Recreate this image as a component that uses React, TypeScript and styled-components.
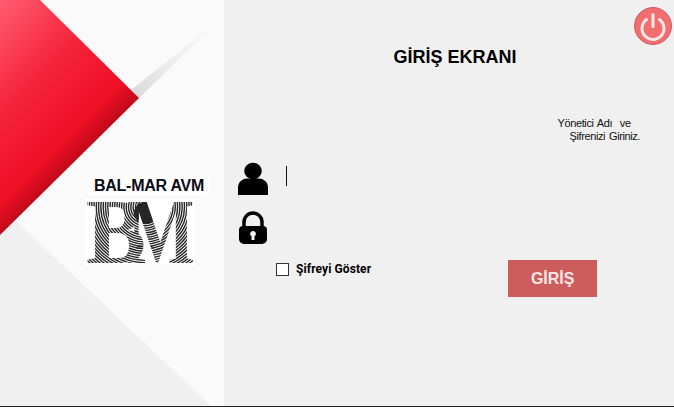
import React from "react";
import styled, { createGlobalStyle } from "styled-components";

const GlobalStyle = createGlobalStyle`
  html, body { margin: 0; padding: 0; background: #f0f0f0; }
  body { font-family: "Liberation Sans", Arial, sans-serif; overflow: hidden; }
`;

const Page = styled.div`
  width: 674px;
  height: 407px;
  box-sizing: border-box;
  display: flex;
  border-bottom: 1px solid #222;
  background: #f0f0f0;
`;

const SidePanel = styled.aside`
  position: relative;
  width: 224px;
  flex: none;
  background: #fafafa;
  overflow: hidden;
  display: flex;
  flex-direction: column;
  align-items: flex-start;
  padding: 176px 0 0 85px;
  box-sizing: border-box;
`;

const Backdrop = styled.svg`
  position: absolute;
  left: 0;
  top: 0;
`;

const BrandName = styled.div`
  position: relative;
  margin-left: 4px;
  width: 120px;
  height: 19px;
  background: #fff;
  color: #0a0a14;
  font-size: 16px;
  font-weight: 700;
  line-height: 19px;
  letter-spacing: -0.25px;
  text-align: center;
  white-space: nowrap;
`;

const LogoMark = styled.svg`
  position: relative;
  margin-top: 4px;
  display: block;
`;

const Main = styled.main`
  flex: 1;
  display: flex;
  flex-direction: column;
  padding: 7px 2px 0 14px;
  box-sizing: border-box;
`;

const PowerButton = styled.button`
  align-self: flex-end;
  width: 38px;
  height: 38px;
  padding: 0;
  border: 0;
  background: none;
  display: block;
`;

const Title = styled.h1`
  margin: 2px 0 0;
  height: 20px;
  color: #000;
  font-size: 18px;
  font-weight: 700;
  line-height: 20px;
  text-align: center;
`;

const Hint = styled.p`
  align-self: flex-end;
  margin: 50px 32px 0 0;
  color: #111;
  font-size: 11px;
  line-height: 13px;
  letter-spacing: -0.4px;
  word-spacing: 1.2px;
  white-space: pre;
`;

const HintLine = styled.span<{ $indent: number }>`
  display: block;
  padding-left: ${(p) => p.$indent}px;
`;

const FieldRow = styled.div<{ $top: number }>`
  display: flex;
  align-items: center;
  margin-top: ${(p) => p.$top}px;
  height: 34px;
`;

const FieldIcon = styled.svg`
  width: 30px;
  height: 34px;
  flex: none;
`;

const Caret = styled.span`
  width: 1px;
  height: 20px;
  margin: -6px 0 0 18px;
  background: #111;
`;

const OptionsRow = styled.div`
  display: flex;
  align-items: flex-start;
  margin-top: 15px;
  padding-left: 38px;
`;

const ShowPassword = styled.label`
  display: flex;
  align-items: center;
  gap: 7px;
  margin-top: 2px;
  color: #000;
  font-family: Roboto, "Liberation Sans", sans-serif;
  font-size: 12px;
  font-weight: 700;
  letter-spacing: 0.1px;
`;

const CheckBox = styled.span`
  width: 11px;
  height: 11px;
  background: #fff;
  border: 1px solid #333;
`;

const LoginButton = styled.button`
  width: 89px;
  height: 37px;
  margin-left: 137px;
  padding: 0;
  border: 0;
  background: #cd5c5c;
  color: #fde6e6;
  font-family: "Liberation Sans", sans-serif;
  font-size: 16px;
  font-weight: 700;
`;

const stripes = Array.from({ length: 48 }, (_, i) => 5 + i * 2.3);

export default function App() {
  return (
    <>
      <GlobalStyle />
      <Page>
        <SidePanel>
          <Backdrop width="224" height="406" viewBox="0 0 224 406">
            <defs>
              <linearGradient id="red" x1="0" y1="0" x2="117" y2="117" gradientUnits="userSpaceOnUse">
                <stop offset="0" stopColor="#ff5c72" />
                <stop offset="0.5" stopColor="#f5233a" />
                <stop offset="0.88" stopColor="#ee0f25" />
                <stop offset="1" stopColor="#c20a1b" />
              </linearGradient>
              <linearGradient id="fold" x1="139" y1="98" x2="215" y2="25" gradientUnits="userSpaceOnUse">
                <stop offset="0" stopColor="#dadada" />
                <stop offset="0.4" stopColor="#ececec" />
                <stop offset="1" stopColor="#fafafa" />
              </linearGradient>
            </defs>
            <polygon points="0,206 211,406 0,406" fill="#f0f0f0" />
            <polygon points="139,98 222,18 131,90" fill="url(#fold)" />
            <polygon points="0,0 40,0 139,98 0,235" fill="url(#red)" />
          </Backdrop>
          <BrandName>BAL-MAR AVM</BrandName>
          <LogoMark width="110" height="66" viewBox="0 0 110 66">
            <defs>
              <clipPath id="letters">
                <text x="1" y="64" fontFamily="Liberation Serif" fontWeight="700" fontSize="94" textLength="60" lengthAdjust="spacingAndGlyphs">B</text>
                <text x="42" y="64" fontFamily="Liberation Serif" fontWeight="700" fontSize="94" textLength="68" lengthAdjust="spacingAndGlyphs">M</text>
              </clipPath>
            </defs>
            <rect width="110" height="66" fill="#fff" />
            <g clipPath="url(#letters)" fill="none" stroke="#262626" strokeWidth="1.4">
              {stripes.map((r) => (
                <circle key={r} cx="60" cy="8" r={r} />
              ))}
              <circle cx="60" cy="14" r="11" fill="#262626" stroke="none" />
            </g>
          </LogoMark>
        </SidePanel>
        <Main>
          <PowerButton aria-label="Kapat">
            <svg width="38" height="38" viewBox="0 0 38 38">
              <circle cx="19" cy="19" r="18.5" fill="#f26d70" stroke="#c95f62" />
              <path d="M12.6 12.5a11 11 0 1 0 12.8 0" fill="none" stroke="#fde8e8" strokeWidth="3" strokeLinecap="round" />
              <path d="M19 7.5v12" stroke="#fde8e8" strokeWidth="3" strokeLinecap="round" />
            </svg>
          </PowerButton>
          <Title>GİRİŞ EKRANI</Title>
          <Hint>
            <HintLine $indent={0}>Yönetici Adı  ve</HintLine>
            <HintLine $indent={12}>Şifrenizi Giriniz.</HintLine>
          </Hint>
          <FieldRow $top={19}>
            <FieldIcon viewBox="0 0 30 34">
              <ellipse cx="15" cy="9" rx="8.8" ry="8.3" fill="#000" />
              <path d="M0 33v-7c0-6 4-9 9-9.500h12c5 .5 9 3.500 9 9.500v7z" fill="#000" />
            </FieldIcon>
            <Caret />
          </FieldRow>
          <FieldRow $top={15}>
            <FieldIcon viewBox="0 0 30 34">
              <path d="M6 17v-6a9 9 0 0 1 18 0v6" fill="none" stroke="#000" strokeWidth="3.500" />
              <path fillRule="evenodd" fill="#000" d="M5 15h20a4 4 0 0 1 4 4v9a5 5 0 0 1-5 5H6a5 5 0 0 1-5-5v-9a4 4 0 0 1 4-4zM15 20a2.800 2.800 0 0 0-1.500 5.200V29h3v-3.800A2.800 2.800 0 0 0 15 20z" />
            </FieldIcon>
          </FieldRow>
          <OptionsRow>
            <ShowPassword>
              <CheckBox />
              Şifreyi Göster
            </ShowPassword>
            <LoginButton>GİRİŞ</LoginButton>
          </OptionsRow>
        </Main>
      </Page>
    </>
  );
}
